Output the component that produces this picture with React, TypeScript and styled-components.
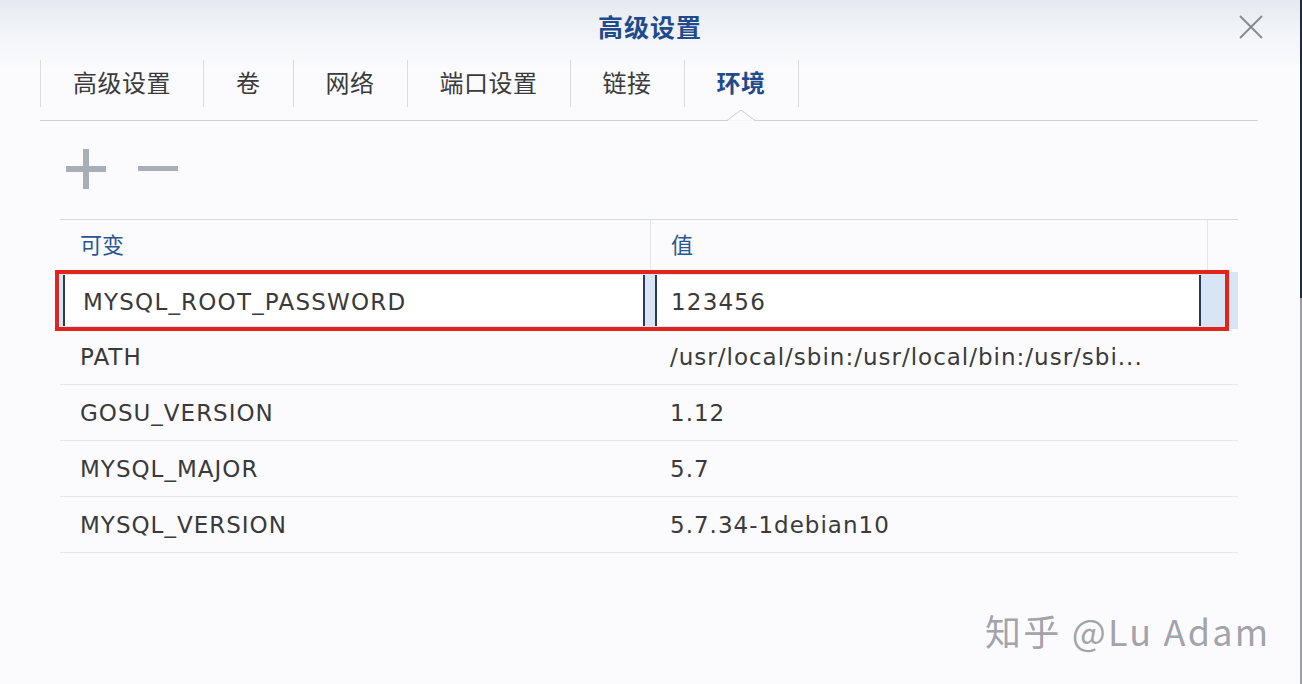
import React from "react";
import styled, { createGlobalStyle } from "styled-components";

const Global = createGlobalStyle`
  html, body { margin: 0; padding: 0; background: #fbfbfd; }
  body { font-family: "DejaVu Sans", "Noto Sans CJK SC", sans-serif; }
  * { box-sizing: border-box; }
`;

const Page = styled.div`
  position: relative;
  width: 1302px;
  height: 684px;
  display: flex;
  overflow: hidden;
`;

const Dialog = styled.div`
  flex: 1;
  display: flex;
  flex-direction: column;
  background: linear-gradient(180deg, #e6eaf0 0px, #f4f6f9 40px, #fbfbfd 70px, #fbfbfd 100%);
`;

const EdgeStrip = styled.div`
  width: 2px;
  display: flex;
  flex-direction: column;
`;

const EdgePart = styled.div<{ $h?: number; $c: string }>`
  background: ${(p) => p.$c};
  ${(p) => (p.$h ? `height: ${p.$h}px;` : "flex: 1;")}
`;

const Header = styled.div`
  height: 54px;
  display: grid;
  grid-template-columns: 1fr auto 1fr;
  align-items: center;
`;

const Title = styled.div`
  grid-column: 2;
  font-family: "Noto Sans CJK SC", sans-serif;
  font-weight: 700;
  font-size: 25px;
  color: #1f4b8c;
  letter-spacing: 1px;
  padding-bottom: 2px;
`;

const CloseBtn = styled.div`
  grid-column: 3;
  justify-self: end;
  margin-right: 37px;
  width: 24px;
  height: 24px;
  display: flex;
`;

const TabBar = styled.div`
  margin: 0 42px 0 40px;
  height: 67px;
  padding-top: 6px;
  display: flex;
  align-items: flex-start;
  border-bottom: 1px solid #cfd2d8;
`;

const Tab = styled.div<{ $active?: boolean; $last?: boolean }>`
  position: relative;
  height: 47px;
  padding: 0 32px 4px 32px;
  display: flex;
  align-items: center;
  border-left: 1px solid #d9dbdf;
  ${(p) => (p.$last ? "border-right: 1px solid #d9dbdf;" : "")}
  font-family: "Noto Sans CJK SC", sans-serif;
  font-size: 24px;
  letter-spacing: 0.5px;
  font-weight: ${(p) => (p.$active ? 700 : 400)};
  color: ${(p) => (p.$active ? "#1f4b8c" : "#3a3a3a")};
`;

const Notch = styled.svg`
  position: absolute;
  left: 50%;
  bottom: -14px;
  transform: translateX(-50%);
`;

const Toolbar = styled.div`
  height: 98px;
  display: flex;
  align-items: center;
  gap: 32px;
  padding-left: 66px;
  padding-bottom: 2px;
`;

const Table = styled.div`
  margin: 0 62px 0 60px;
  position: relative;
`;

const GRID = "590px 557px 1fr";

const HeadRow = styled.div`
  display: grid;
  grid-template-columns: ${GRID};
  height: 53px;
  border-top: 1px solid #d5d8dd;
`;

const HeadCell = styled.div<{ $divider?: boolean }>`
  display: flex;
  align-items: center;
  padding-left: 20px;
  padding-bottom: 6px;
  font-family: "Noto Sans CJK SC", sans-serif;
  font-size: 22px;
  color: #2a5593;
  ${(p) => (p.$divider ? "border-left: 1px solid #e4e6ea;" : "")}
`;

const SelectedRow = styled.div`
  display: grid;
  grid-template-columns: ${GRID};
  height: 57px;
  background: #d8e5f4;
  padding: 3px 0;
`;

const EditCell = styled.div<{ $ml: number; $mr: number; $pl: number }>`
  margin: 0 ${(p) => p.$mr}px 0 ${(p) => p.$ml}px;
  background: #ffffff;
  border-left: 2px solid #2a3a58;
  border-right: 2px solid #2a3a58;
  display: flex;
  align-items: center;
  padding-left: ${(p) => p.$pl}px;
  padding-top: 2px;
  font-size: 23px;
  letter-spacing: 1.2px;
  color: #3a3a3a;
`;

const Row = styled.div`
  display: grid;
  grid-template-columns: ${GRID};
  height: 56px;
  border-bottom: 1px solid #e7e8ec;
`;

const Cell = styled.div`
  display: flex;
  align-items: center;
  padding-left: 20px;
  padding-top: 1px;
  font-size: 23px;
  letter-spacing: 1px;
  color: #3a3a3a;
  white-space: nowrap;
  overflow: hidden;
`;

const Highlight = styled.div`
  position: absolute;
  left: -5px;
  top: 51px;
  width: 1174px;
  height: 61px;
  border: 4px solid #e3231d;
  pointer-events: none;
`;

const Watermark = styled.div`
  position: absolute;
  left: 985px;
  top: 604px;
  font-family: "Noto Sans CJK SC", sans-serif;
  font-size: 36px;
  color: #a3a3ab;
  letter-spacing: 2.2px;
  text-shadow: 1px 1px 0 #ffffff, -1px 0 0 #ffffff;
  white-space: nowrap;
`;

const rows: [string, string][] = [
  ["PATH", "/usr/local/sbin:/usr/local/bin:/usr/sbi..."],
  ["GOSU_VERSION", "1.12"],
  ["MYSQL_MAJOR", "5.7"],
  ["MYSQL_VERSION", "5.7.34-1debian10"],
];

const tabs = ["高级设置", "卷", "网络", "端口设置", "链接", "环境"];

export default function App() {
  return (
    <Page>
      <Global />
      <Dialog>
        <Header>
          <Title>高级设置</Title>
          <CloseBtn>
            <svg width="24" height="24" viewBox="0 0 24 24">
              <path d="M1 1 L23 23 M23 1 L1 23" stroke="#8a8c90" strokeWidth="2" fill="none" />
            </svg>
          </CloseBtn>
        </Header>
        <TabBar>
          {tabs.map((t, i) => (
            <Tab key={t} $active={i === tabs.length - 1} $last={i === tabs.length - 1}>
              {t}
              {i === tabs.length - 1 && (
                <Notch width="28" height="12" viewBox="0 0 28 12">
                  <path d="M0 11.5 L14 1 L28 11.5" fill="#fbfbfd" stroke="#c9ccd2" strokeWidth="1" />
                  <rect x="1" y="11.3" width="26" height="1" fill="#fbfbfd" />
                </Notch>
              )}
            </Tab>
          ))}
        </TabBar>
        <Toolbar>
          <svg width="40" height="40" viewBox="0 0 40 40">
            <rect x="17" y="0" width="6" height="40" fill="#a9adb5" />
            <rect x="0" y="17" width="40" height="6" fill="#a9adb5" />
          </svg>
          <svg width="40" height="40" viewBox="0 0 40 40">
            <rect x="0" y="17" width="40" height="5" fill="#a9adb5" />
          </svg>
        </Toolbar>
        <Table>
          <HeadRow>
            <HeadCell>可变</HeadCell>
            <HeadCell $divider>值</HeadCell>
            <HeadCell $divider />
          </HeadRow>
          <SelectedRow>
            <EditCell $ml={3} $mr={5} $pl={18}>MYSQL_ROOT_PASSWORD</EditCell>
            <EditCell $ml={5} $mr={6} $pl={14}>123456</EditCell>
            <div />
          </SelectedRow>
          {rows.map(([k, v]) => (
            <Row key={k}>
              <Cell>{k}</Cell>
              <Cell>{v}</Cell>
              <div />
            </Row>
          ))}
          <Highlight />
        </Table>
      </Dialog>
      <EdgeStrip>
        <EdgePart $h={298} $c="#1d2b3f" />
        <EdgePart $c="#9c9ea2" />
      </EdgeStrip>
      <Watermark>知乎 @Lu Adam</Watermark>
    </Page>
  );
}
